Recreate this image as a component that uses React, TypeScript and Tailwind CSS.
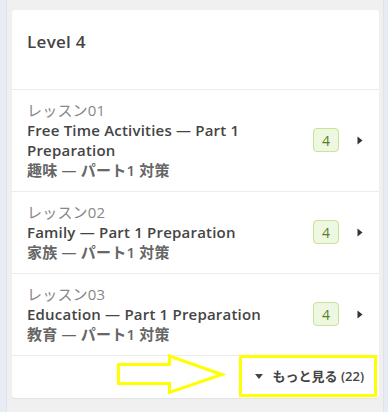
const LESSONS = [
  { no: '01', en: 'Free Time Activities — Part 1 Preparation', ja: '趣味 — パート1 対策', level: 4 },
  { no: '02', en: 'Family — Part 1 Preparation', ja: '家族 — パート1 対策', level: 4 },
  { no: '03', en: 'Education — Part 1 Preparation', ja: '教育 — パート1 対策', level: 4 },
]

const FONT = "font-['Open_Sans','Noto_Sans_CJK_JP',sans-serif]"

function Caret() {
  return (
    <svg width="6" height="9" viewBox="0 0 6 9" className="shrink-0">
      <path d="M0.5 0.5 L5.5 4.5 L0.5 8.5 Z" fill="#333" />
    </svg>
  )
}

export default function App() {
  return (
    <div className={`flex h-[412px] w-[388px] ${FONT}`}>
      <div className="w-[7px] shrink-0 border-r border-[#dfe4ec] bg-[#e6ebf4]" />
      <div className="flex-1 bg-[#f0f0f0] pl-[5px] pr-[4px] pt-[10px]">
        <div className="relative h-[388px] rounded-[3px] bg-white shadow-[0_1px_1px_rgba(0,0,0,0.06)]">
          <div className="h-[79px] px-[15px] pt-[20px] text-[17px] font-semibold leading-[24px] tracking-[0.3px] text-[#444]">
            Level 4
          </div>
          {LESSONS.map((l) => (
            <div
              key={l.no}
              className="flex items-center border-t border-[#ececec] pb-[11px] pl-[15px] pr-[15px] pt-[10px]"
            >
              <div className="w-[272px] text-[15px] leading-[20px] tracking-[0.2px]">
                <div className="text-[#888]">レッスン{l.no}</div>
                <div className="font-semibold text-[#444]">{l.en}</div>
                <div className="font-semibold text-[#666]">{l.ja}</div>
              </div>
              <div className="ml-auto flex h-[24px] w-[26px] items-center justify-center rounded-[4px] border border-[#c8e39a] bg-[#eef7df] text-[14px] text-[#5b7d2b]">
                {l.level}
              </div>
              <div className="ml-[18px] mr-[1px]">
                <Caret />
              </div>
            </div>
          ))}
          <div className="flex h-[43px] items-center justify-end border-t border-[#ececec] pr-[15px]">
            <div className="flex items-center text-[13px] font-semibold text-[#444]">
              <svg width="8" height="6" viewBox="0 0 8 6" className="mr-[10px]">
                <path d="M0 0 L8 0 L4 5 Z" fill="#444" />
              </svg>
              もっと見る (22)
            </div>
          </div>

          {/* annotation overlays */}
          <div className="absolute left-[227px] top-[345px] h-[42px] w-[138px] border-[3px] border-[#ffff00]" />
          <svg
            className="absolute left-[104px] top-[344px]"
            width="110"
            height="42"
            viewBox="0 0 110 42"
          >
            <path
              d="M2.5 10.5 L53.5 10.5 L53.5 2 L106 20.5 L53.5 38.5 L53.5 29.5 L2.5 29.5 Z"
              fill="none"
              stroke="#ffff00"
              strokeWidth="3"
              strokeLinejoin="miter"
            />
          </svg>
        </div>
      </div>
      <div className="w-[5px] shrink-0 border-l border-[#dfe4ec] bg-[#e6ebf4]" />
    </div>
  )
}
